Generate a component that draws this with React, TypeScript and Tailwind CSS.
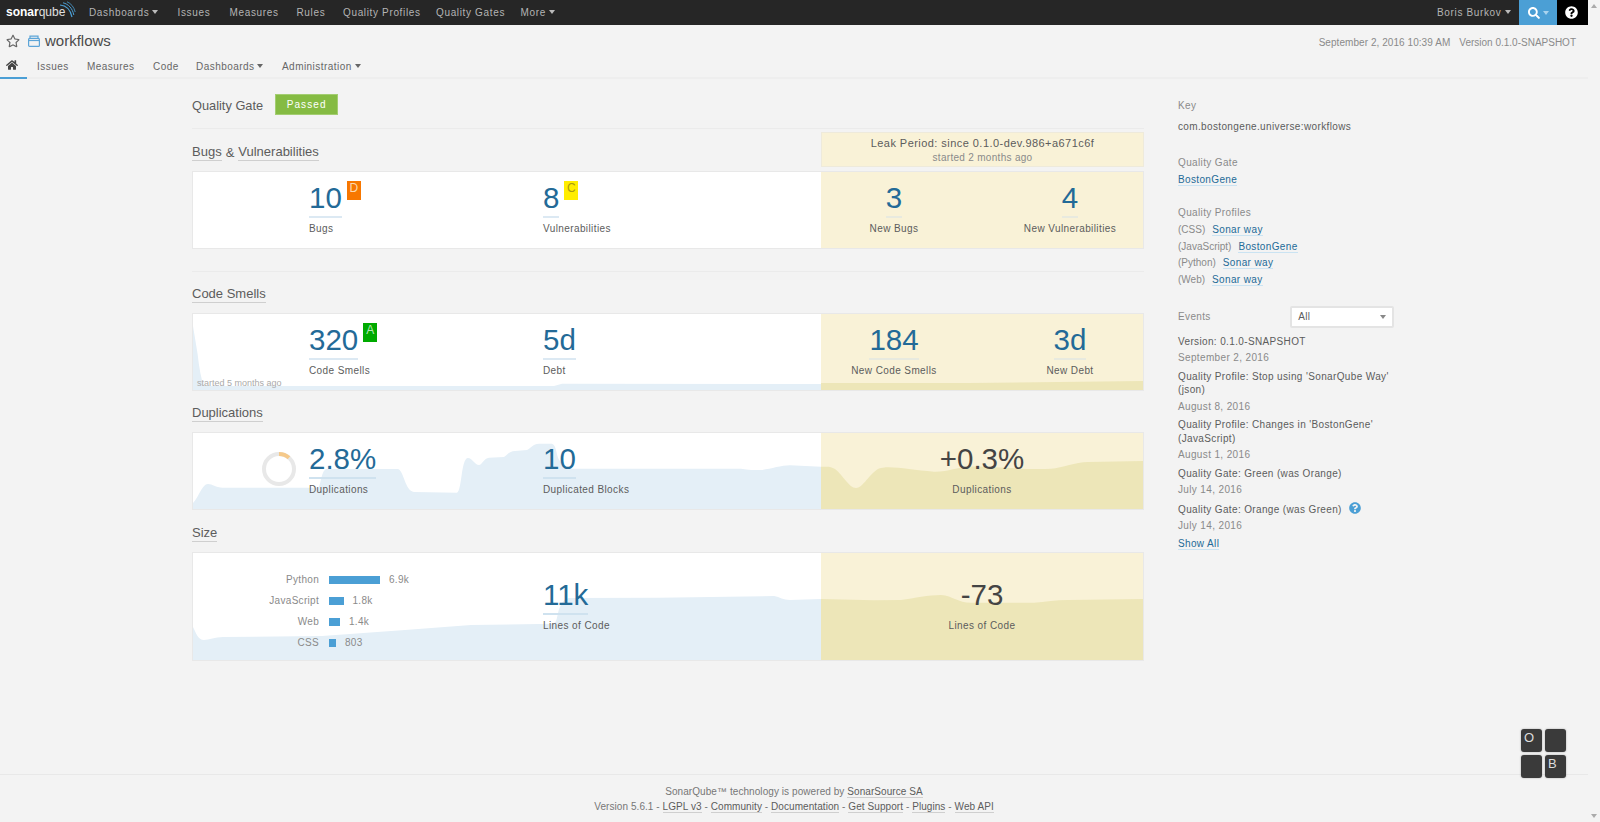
import React from 'react';
import { FaHome, FaQuestionCircle, FaRegStar, FaSearch } from 'react-icons/fa';

const Caret = ({ className = 'border-t-[#bbbbbb]' }: { className?: string }) => (
  <span className={`inline-block ml-[3px] align-[2px] border-x-[3.5px] border-t-[4px] border-x-transparent ${className}`} />
);

const TopLink = ({ label, caret, width }: { label: string; caret?: boolean; width: string }) => (
  <span className={`${width} shrink-0 text-[#b4b4b4]`}>
    {label}
    {caret && <Caret />}
  </span>
);

const TabLink = ({ label, caret, width }: { label: string; caret?: boolean; width: string }) => (
  <span className={`${width} shrink-0 text-[#666666]`}>
    {label}
    {caret && <Caret className="border-t-[#666666]" />}
  </span>
);

const Logo = () => (
  <div className="relative w-[89px] shrink-0 pl-[6px] text-[12px] leading-[25px] tracking-normal text-white">
    <span className="font-bold">sonar</span>
    <span className="font-normal text-[#e0e0e0]">qube</span>
    <svg className="absolute left-[59px] top-[1px]" width="17" height="18" viewBox="0 0 17 18" fill="none" stroke="#4b9fd5">
      <path d="M1 4C7 4.5 11.5 9 13 16" strokeWidth="1.2" />
      <path d="M4 1.8C9.5 3 13.5 7.5 14.8 14" strokeWidth="1" />
      <path d="M8 .8C12 2.4 15 6 16.2 11" strokeWidth=".8" />
    </svg>
  </div>
);

const TopNav = () => (
  <div className="flex h-[25px] items-center bg-[#262626] text-[10px] leading-[25px] tracking-[0.65px]">
    <Logo />
    <TopLink label="Dashboards" caret width="w-[88.5px]" />
    <TopLink label="Issues" width="w-[52px]" />
    <TopLink label="Measures" width="w-[67px]" />
    <TopLink label="Rules" width="w-[46.5px]" />
    <TopLink label="Quality Profiles" width="w-[93px]" />
    <TopLink label="Quality Gates" width="w-[84.5px]" />
    <TopLink label="More" caret width="w-[60px]" />
    <div className="flex-1" />
    <span className="w-[82px] shrink-0 text-[#b4b4b4]">
      Boris Burkov
      <Caret />
    </span>
    <div className="flex h-[25px] w-[38px] shrink-0 items-center justify-center bg-[#4b9fd5] text-white">
      <FaSearch className="text-[12px]" />
      <Caret className="border-t-[#a9d3ee]" />
    </div>
    <div className="flex h-[25px] w-[31px] shrink-0 items-center justify-center bg-black pr-[2px] text-white">
      <FaQuestionCircle className="text-[13px]" />
    </div>
  </div>
);

const ProjectBar = () => (
  <div className="border-b-2 border-[#eeeeee]">
    <div className="flex h-[31px] items-center pl-[6px] pr-[12px]">
      <FaRegStar className="text-[14px] text-[#666666]" />
      <svg className="ml-[8px]" width="12" height="12" viewBox="0 0 12 12" fill="none" stroke="#5da5d8" strokeWidth="1.2">
        <rect x=".6" y="3.4" width="10.8" height="8" rx="1" />
        <path d="M2 3.4V1.2h8v2.2" />
        <path d="M.8 5.5h10.4" />
      </svg>
      <span className="ml-[5px] mt-[2px] text-[15px] text-[#4a4a4a]">workflows</span>
      <div className="flex-1" />
      <span className="mt-[4px] text-[10px] tracking-[0.06px] text-[#8a8a8a]">September 2, 2016 10:39 AM</span>
      <span className="ml-[9px] mt-[4px] text-[10px] text-[#8a8a8a]">Version 0.1.0-SNAPSHOT</span>
    </div>
    <div className="flex h-[21px] items-center text-[10px] tracking-[0.45px]">
      <div className="flex h-[23px] w-[27px] shrink-0 translate-y-[1px] items-center justify-center border-b-2 border-[#4b9fd5] pr-[3px] text-[#444444]">
        <FaHome className="mb-[3px] text-[12px]" />
      </div>
      <div className="flex pl-[10px]">
        <TabLink label="Issues" width="w-[50px]" />
        <TabLink label="Measures" width="w-[66px]" />
        <TabLink label="Code" width="w-[43px]" />
        <TabLink label="Dashboards" caret width="w-[86px]" />
        <TabLink label="Administration" caret width="w-[90px]" />
      </div>
    </div>
  </div>
);

const Rating = ({ value, tone }: { value: string; tone: string }) => (
  <span className={`absolute left-full top-[1px] ml-[5px] h-[19px] w-[14px] text-center text-[12px] leading-[14px] ${tone}`}>
    {value}
  </span>
);

const Measure = ({
  value,
  label,
  rating,
  ratingTone,
  dark,
  line = 'border-[#dce9f3]',
}: {
  value: string;
  label: string;
  rating?: string;
  ratingTone?: string;
  dark?: boolean;
  line?: string;
}) => (
  <div>
    <div className="relative inline-block">
      <div
        className={`h-[38px] text-[29.5px] leading-[36px] ${
          dark ? 'text-[#444444]' : `border-b-2 ${line} text-[#236a97]`
        }`}
      >
        {value}
      </div>
      {rating && <Rating value={rating} tone={ratingTone ?? ''} />}
    </div>
    <div className="mt-[4px] text-[10px] leading-[14px] tracking-[0.4px] text-[#5c5c5c]">{label}</div>
  </div>
);

// Panel coordinates are taken from the reference, the svg gets a matching viewBox
const Chart = ({ h, blue, leak }: { h: number; blue: string; leak: string }) => (
  <svg className="absolute left-0 top-0" width="950" height={h} viewBox={`0 0 950 ${h}`}>
    <path d={blue} fill="#e4eff7" />
    <path d={leak} fill="#ede6b8" />
  </svg>
);

const Panel = ({
  h,
  chart,
  left,
  right,
}: {
  h: string;
  chart?: React.ReactNode;
  left: React.ReactNode;
  right: React.ReactNode;
}) => (
  <div className={`relative flex ${h} w-[952px] border border-[#e8e8e8] bg-white`}>
    <div className="absolute inset-y-0 left-[628px] right-0 bg-[#f9f2d7]" />
    {chart}
    <div className="relative flex w-[628px] shrink-0">{left}</div>
    <div className="relative flex min-w-0 flex-1 justify-center">{right}</div>
  </div>
);

const Col = ({ width, pt, children }: { width: string; pt: string; children: React.ReactNode }) => (
  <div className={`${width} ${pt} shrink-0`}>{children}</div>
);

const LeakCol = ({ pt, children }: { pt: string; children: React.ReactNode }) => (
  <div className={`${pt} flex w-[176px] shrink-0 justify-center text-center`}>
    <div>{children}</div>
  </div>
);

const Title = ({ h = 'h-[41px]', children }: { h?: string; children: React.ReactNode }) => (
  <div className={`flex ${h} items-end pb-[10px] text-[13px] leading-[17px] text-[#5c5c5c]`}>{children}</div>
);

const Under = ({ children }: { children: React.ReactNode }) => (
  <span className="border-b border-[#cfcfcf]">{children}</span>
);

const Donut = () => (
  <svg className="mr-[13px] mt-[19px] shrink-0" width="34" height="34" viewBox="0 0 34 34" fill="none" strokeWidth="4">
    <circle cx="17" cy="17" r="15" stroke="#e8e8e8" />
    <path d="M17 2A15 15 0 0 1 27 5.8" stroke="#f5c98a" />
  </svg>
);

const langs = [
  { name: 'Python', value: '6.9k', bar: 'w-[51px]' },
  { name: 'JavaScript', value: '1.8k', bar: 'w-[14.5px]' },
  { name: 'Web', value: '1.4k', bar: 'w-[11px]' },
  { name: 'CSS', value: '803', bar: 'w-[7px]' },
];

const LangChart = () => (
  <div className="flex w-[350px] shrink-0 flex-col gap-[5px] pt-[19px] text-[10px] leading-[16px] tracking-[0.3px] text-[#8a8a8a]">
    {langs.map((l) => (
      <div key={l.name} className="flex h-[16px] items-center">
        <div className="w-[126px] text-right">{l.name}</div>
        <div className={`ml-[10px] h-[8px] ${l.bar} bg-[#4b9fd5]`} />
        <div className="ml-[9px]">{l.value}</div>
      </div>
    ))}
  </div>
);

const Main = () => (
  <div className="w-[952px] shrink-0">
    <div className="flex items-center pt-[15px] text-[12.8px] text-[#5c5c5c]">
      <span className="mt-[2px]">Quality Gate</span>
      <span className="ml-[12px] flex h-[21px] w-[63px] items-center justify-center border border-[#a3cd71] bg-[#85bb43] text-[10px] tracking-[1.1px] text-white">
        Passed
      </span>
    </div>
    <div className="mt-[13px] h-[1px] bg-[#ebebeb]" />

    <div className="mt-[3px] flex h-[36px] pb-[1px]">
      <div className="flex w-[629px] items-end pb-[6px] text-[13px] leading-[17px] text-[#5c5c5c]">
        <Under>Bugs</Under>
        <span className="mx-[4px]">&amp;</span>
        <Under>Vulnerabilities</Under>
      </div>
      <div className="flex-1 border border-[#eeeadb] bg-[#f9f2d7] text-center tracking-[0.45px]">
        <div className="mt-[3px] text-[11px] leading-[15px] text-[#5c5c5c]">Leak Period: since 0.1.0-dev.986+a671c6f</div>
        <div className="text-[10px] leading-[13px] tracking-[0.3px] text-[#8a8a8a]">started 2 months ago</div>
      </div>
    </div>
    <div className="mt-[3px]">
      <Panel
        h="h-[78px]"
        left={
          <>
            <div className="w-[116px] shrink-0" />
            <Col width="w-[234px]" pt="pt-[8px]">
              <Measure value="10" label="Bugs" rating="D" ratingTone="bg-[#f77700] text-[#fbd9b0]" />
            </Col>
            <Col width="w-[234px]" pt="pt-[8px]">
              <Measure value="8" label="Vulnerabilities" rating="C" ratingTone="bg-[#ffed00] text-[#a89a10]" />
            </Col>
          </>
        }
        right={
          <>
            <LeakCol pt="pt-[8px]">
              <Measure value="3" label="New Bugs" line="border-[#e8eadf]" />
            </LeakCol>
            <LeakCol pt="pt-[8px]">
              <Measure value="4" label="New Vulnerabilities" line="border-[#e8eadf]" />
            </LeakCol>
          </>
        }
      />
    </div>

    <div className="mt-[22px] h-[1px] bg-[#ebebeb]" />
    <Title>
      <Under>Code Smells</Under>
    </Title>
    <Panel
      h="h-[78px]"
      chart={
        <>
          <Chart
            h={76}
            blue="M0 12 L4.6 40 Q7 62 10.8 72 L361 72 L369 69.7 L628 70 V76 H0 Z"
            leak="M628 69 L775 69 L950 67 V76 H628 Z"
          />
          <span className="absolute bottom-[1px] left-[4px] text-[9px] leading-[12px] text-[#aaaaaa]">started 5 months ago</span>
        </>
      }
      left={
        <>
          <div className="w-[116px] shrink-0" />
          <Col width="w-[234px]" pt="pt-[8px]">
            <Measure value="320" label="Code Smells" rating="A" ratingTone="bg-[#00aa00] text-[#b5e6b5]" />
          </Col>
          <Col width="w-[234px]" pt="pt-[8px]">
            <Measure value="5d" label="Debt" />
          </Col>
        </>
      }
      right={
        <>
          <LeakCol pt="pt-[8px]">
            <Measure value="184" label="New Code Smells" line="border-[#e8eadf]" />
          </LeakCol>
          <LeakCol pt="pt-[8px]">
            <Measure value="3d" label="New Debt" line="border-[#e8eadf]" />
          </LeakCol>
        </>
      }
    />

    <Title>
      <Under>Duplications</Under>
    </Title>
    <Panel
      h="h-[78px]"
      chart={
        <Chart
          h={76}
          blue="M0 70 C6 64 9 51 15 51 C20 51 22 54.7 30 54.7 L125 54.7 C128 54 128 36 134 36 L205 36 C211 38 212 58 221 59 L264 59.7 C269 58 268 25 275 25 C279 25 282 32 286 32 C289 32 291 25 296 24.7 L311 24 C315 22 316 18 322 18 L334 17 C338 15 340 10.7 346 10.7 L359 10.7 C364 12 363 24 367 28 C370 32 372 35.7 378 35.7 L548 35.7 C555 37 562 37 568 37 C578 36 588 32.3 597 32.3 L628 33.7 V76 H0 Z"
          leak="M628 33.7 C634 33.7 638 33 642 36 C650 42 656 55 663 55 C671 55 679 34.7 690 34.7 C700 33 720 37 741 38.7 C755 39 765 34 775 33.7 C795 33 830 37 858 35.7 C870 35 882 29 895 29 L950 28 V76 H628 Z"
        />
      }
      left={
        <>
          <div className="flex w-[116px] shrink-0 justify-end pl-[68px]">
            <Donut />
          </div>
          <Col width="w-[234px]" pt="pt-[8px]">
            <Measure value="2.8%" label="Duplications" line="border-[#cfe2ef]" />
          </Col>
          <Col width="w-[234px]" pt="pt-[8px]">
            <Measure value="10" label="Duplicated Blocks" line="border-[#cfe2ef]" />
          </Col>
        </>
      }
      right={
        <div className="pt-[8px] text-center">
          <Measure value="+0.3%" label="Duplications" dark />
        </div>
      }
    />

    <Title h="h-[42px]">
      <Under>Size</Under>
    </Title>
    <Panel
      h="h-[109px]"
      chart={
        <Chart
          h={107}
          blue="M0 74 C3 80 5 87 11 87 C16 87 22 84 30 84 L129 83 L212 77 L278 72 L361 70.7 C365 68 364 58 368 52 C371 47 372 45 378 45 L465 44.7 L581 43 C587 44 590 47 597 47 L628 46 V107 H0 Z"
          leak="M628 46 L681 47.3 L708 47 C722 45 735 42 748 42 C760 43 765 49.7 778 49.7 L841 49.7 C852 49 863 47 875 47 L950 46 V107 H628 Z"
        />
      }
      left={
        <>
          <LangChart />
          <Col width="w-[234px]" pt="pt-[24px]">
            <Measure value="11k" label="Lines of Code" line="border-[#cfe2ef]" />
          </Col>
        </>
      }
      right={
        <div className="pt-[24px] text-center">
          <Measure value="-73" label="Lines of Code" dark />
        </div>
      }
    />
  </div>
);

const SideLink = ({ children }: { children: React.ReactNode }) => (
  <span className="border-b border-[#cae3f2] leading-[13px] text-[#236a97]">{children}</span>
);

const Event = ({ title, date, info }: { title: React.ReactNode; date: string; info?: boolean }) => (
  <div className="mb-[5.5px]">
    <div className="leading-[13.5px] text-[#5c5c5c]">
      {title}
      {info && <FaQuestionCircle className="ml-[7px] inline-block align-[-1px] text-[12px] text-[#4b9fd5]" />}
    </div>
    <div className="mt-[3px] leading-[13px] text-[#8a8a8a]">{date}</div>
  </div>
);

const Profile = ({ lang, name }: { lang: string; name: string }) => (
  <div className="h-[16.7px] leading-[16.7px]">
    <span className="tracking-normal text-[#8a8a8a]">({lang})</span>
    <span className="ml-[7px]">
      <SideLink>{name}</SideLink>
    </span>
  </div>
);

const Sidebar = () => (
  <div className="ml-[34px] w-[216px] shrink-0 pt-[19px] text-[10px] tracking-[0.36px]">
    <div className="leading-[16px] text-[#8a8a8a]">Key</div>
    <div className="mt-[5px] leading-[16px] text-[#5c5c5c]">com.bostongene.universe:workflows</div>
    <div className="mt-[20px] leading-[16px] text-[#8a8a8a]">Quality Gate</div>
    <div className="leading-[17px]">
      <SideLink>BostonGene</SideLink>
    </div>
    <div className="mt-[17px] leading-[16px] text-[#8a8a8a]">Quality Profiles</div>
    <div className="pt-[1px]">
      <Profile lang="CSS" name="Sonar way" />
      <Profile lang="JavaScript" name="BostonGene" />
      <Profile lang="Python" name="Sonar way" />
      <Profile lang="Web" name="Sonar way" />
    </div>
    <div className="mt-[17px] flex items-center">
      <span className="w-[112.5px] text-[#8a8a8a]">Events</span>
      <div className="flex h-[22px] w-[104px] items-center justify-between rounded-[2px] border-2 border-[#e4e4e4] bg-white pl-[6px] pr-[6px] text-[#5c5c5c]">
        <span>All</span>
        <span className="border-x-[3.5px] border-t-[4px] border-x-transparent border-t-[#888888]" />
      </div>
    </div>
    <div className="mt-[7px]">
      <Event title="Version: 0.1.0-SNAPSHOT" date="September 2, 2016" />
      <Event title={<>Quality Profile: Stop using 'SonarQube Way'<br />(json)</>} date="August 8, 2016" />
      <Event title={<>Quality Profile: Changes in 'BostonGene'<br />(JavaScript)</>} date="August 1, 2016" />
      <Event title="Quality Gate: Green (was Orange)" date="July 14, 2016" />
      <Event title="Quality Gate: Orange (was Green)" date="July 14, 2016" info />
    </div>
    <div className="-mt-[2px]">
      <SideLink>Show All</SideLink>
    </div>
  </div>
);

const FootLink = ({ children }: { children: React.ReactNode }) => (
  <span className="border-b border-[#cfcfcf] text-[#5c5c5c]">{children}</span>
);

const Footer = () => (
  <div className="border-t border-[#e8e8e8] pt-[9px] text-center text-[10px] leading-[15px] tracking-[0.07px] text-[#777777]">
    <div>
      SonarQube™ technology is powered by <FootLink>SonarSource SA</FootLink>
    </div>
    <div>
      Version 5.6.1 - <FootLink>LGPL v3</FootLink> - <FootLink>Community</FootLink> - <FootLink>Documentation</FootLink> -{' '}
      <FootLink>Get Support</FootLink> - <FootLink>Plugins</FootLink> - <FootLink>Web API</FootLink>
    </div>
  </div>
);

const Key = ({ label }: { label?: string }) => (
  <div className="h-[23px] w-[21px] rounded-[3px] bg-[#3a3a3a] pl-[3px] text-[13px] leading-[17px] text-[#dddddd] shadow-[0_0_2px_rgba(0,0,0,0.35)]">
    {label}
  </div>
);

const App: React.FC = () => {
  return (
    <div className="relative flex h-[822px] overflow-hidden bg-[#f3f3f3] font-['Liberation_Sans',Arial,sans-serif]">
      <div className="flex h-full w-[1588px] shrink-0 flex-col">
        <TopNav />
        <ProjectBar />
        <div className="flex flex-1 pl-[192px]">
          <Main />
          <Sidebar />
        </div>
        <Footer />
        <div className="h-[8px]" />
      </div>
      {/* scrollbar */}
      <div className="flex flex-1 flex-col items-center justify-between py-[4px]">
        <span className="border-x-[3.5px] border-b-[4px] border-x-transparent border-b-[#aaaaaa]" />
        <span className="border-x-[3.5px] border-t-[4px] border-x-transparent border-t-[#aaaaaa]" />
      </div>
      {/* keyboard overlay */}
      <div className="absolute left-[1521px] top-[729px] grid grid-cols-[21px_21px] gap-x-[3px] gap-y-[3px]">
        <Key label="O" />
        <Key />
        <Key />
        <Key label="B" />
      </div>
    </div>
  );
};

export default App;
